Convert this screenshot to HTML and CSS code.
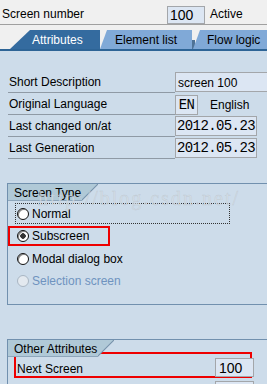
FILE: index.html
```html
<!DOCTYPE html>
<html lang="en">
<head>
    <meta charset="UTF-8">
    <meta name="viewport" content="width=device-width, initial-scale=1.0">
    <title>Screen 100 - Attributes</title>
    <link rel="stylesheet" href="styles.css">
</head>
<body>
    <div class="topbar">
        <span class="top-label">Screen number</span>
        <span class="box box-num">100</span>
        <span class="status">Active</span>
    </div>

    <div class="tabs">
        <div class="tab tab-on">Attributes</div>
        <div class="tab tab-el">Element list</div>
        <div class="tab tab-flow">Flow logic</div>
    </div>

    <div class="panel">
        <div class="fields">
            <div class="field">
                <span class="lbl">Short Description</span>
                <span class="box box-text">screen 100</span>
            </div>
            <div class="field">
                <span class="lbl">Original Language</span>
                <span class="lang">
                    <span class="box box-lang">EN</span>
                    <span>English</span>
                </span>
            </div>
            <div class="field">
                <span class="lbl">Last changed on/at</span>
                <span class="box box-date">2012.05.23</span>
            </div>
            <div class="field">
                <span class="lbl">Last Generation</span>
                <span class="box box-date">2012.05.23</span>
            </div>
        </div>

        <div class="group group-type">
            <div class="grp-title">Screen Type</div>
            <div class="radios">
                <div class="opt opt-focus"><span class="radio"></span>Normal</div>
                <div class="opt opt-mark"><span class="radio radio-on"></span>Subscreen</div>
                <div class="opt"><span class="radio"></span>Modal dialog box</div>
                <div class="opt opt-off"><span class="radio"></span>Selection screen</div>
            </div>
            <div class="watermark">http://blog.csdn.net/</div>
        </div>

        <div class="group group-other">
            <div class="grp-title">Other Attributes</div>
            <div class="next-row">
                <span class="next-label">Next Screen</span>
                <span class="box box-next">100</span>
            </div>
            <div class="more-row">
                <span class="box box-next"></span>
            </div>
        </div>
    </div>
</body>
</html>
```

FILE: styles.css
```css
* {
    margin: 0;
    padding: 0;
    box-sizing: border-box;
}

body {
    width: 267px;
    height: 384px;
    overflow: hidden;
    background-color: #f0f0f0;
    font-family: "Liberation Sans", Arial, sans-serif;
    font-size: 12px;
    color: #000;
}

/* top line: screen number */
.topbar {
    height: 25px;
    border-bottom: 1px solid #a0a0a0;
    display: flex;
    align-items: flex-end;
}

.top-label {
    width: 167px;
    padding-left: 2px;
    line-height: 19px;
}

.box {
    display: block;
    background-color: #dce6f3;
    border: 1px solid #a3a6aa;
}

.box-num {
    width: 38px;
    height: 18px;
    padding-left: 2px;
    font-size: 14px;
    line-height: 17px;
}

.status {
    margin-left: 5px;
    line-height: 19px;
}

/* tab strip */
.tabs {
    display: flex;
    margin-top: 5px;
    padding-left: 10px;
    height: 19px;
    background: linear-gradient(#4f7396, #4f7396) 192px 10px / 3px 9px no-repeat;
}

.tab {
    height: 19px;
    line-height: 21px;
    white-space: nowrap;
}

.tab-on {
    width: 90px;
    padding-left: 22px;
    background-color: #346b9f;
    color: white;
    clip-path: polygon(20px 0, 100% 0, 100% 100%, 0 100%);
}

.tab-el {
    width: 92px;
    padding-left: 15px;
    background-color: #80a9d7;
    clip-path: polygon(7px 0, 100% 0, 100% 100%, 0 100%);
}

.tab-flow {
    flex: 1;
    margin-left: 1px;
    padding-left: 14px;
    background-color: #80a9d7;
    clip-path: polygon(7px 0, 100% 0, 100% 100%, 0 100%);
}

/* content */
.panel {
    border-top: 2px solid #2d6496;
    background-color: #cddcea;
    height: 340px;
    padding-top: 20px;
    overflow: hidden;
}

.fields {
    margin-left: 8px;
}

.field {
    display: grid;
    grid-template-columns: 167px auto;
    height: 22px;
}

.lbl {
    border-bottom: 1px solid #8f9aa5;
    padding: 2px 0 0 1px;
    line-height: 19px;
}

.field .box {
    height: 20px;
    margin-top: 1px;
}

.box-text {
    width: 92px;
    border-right: none;
    padding: 1px 0 0 2px;
    line-height: 18px;
}

.lang {
    display: flex;
    align-items: center;
    gap: 12px;
    padding-top: 2px;
}

.lang .box {
    margin-top: -1px;
}

.box-lang,
.box-date {
    font-family: "Liberation Mono", "Courier New", monospace;
    font-size: 14px;
    letter-spacing: -0.6px;
    line-height: 19px;
}

.box-lang {
    width: 23px;
    text-align: center;
}

.box-date {
    width: 82px;
    padding-left: 1px;
}

/* group boxes */
.group {
    position: relative;
    margin-left: 7px;
    border: 1px solid #7190ae;
    border-right: none;
}

.group-type {
    margin-top: 24px;
}

.group-other {
    margin-top: 34px;
    border-bottom: none;
    height: 60px;
}

.grp-title {
    display: inline-block;
    height: 17px;
    line-height: 18px;
    padding: 0 17px 0 6px;
    background:
        linear-gradient(#8ea6bb, #8ea6bb) left bottom / calc(100% - 16px) 1px no-repeat,
        linear-gradient(#b0c9d7, #b0c9d7) left top / calc(100% - 16px) 100% no-repeat,
        linear-gradient(to bottom right, #b0c9d7 calc(50% - 1px), #7a95ad 50%, transparent calc(50% + 1px)) right top / 17px 100% no-repeat;
}

.radios {
    padding: 2px 0 12px 7px;
}

.opt {
    display: flex;
    align-items: center;
    gap: 3px;
    height: 22px;
    padding-left: 2px;
    white-space: nowrap;
}

.opt-focus {
    width: 215px;
    height: 21px;
    margin-bottom: 1px;
    padding-left: 1px;
    border: 1px dotted #333;
}

.opt-mark {
    width: 102px;
    height: 20px;
    margin: 2px 0 2px -7px;
    padding-left: 7px;
    border: 2px solid #ee0000;
}

.opt-off {
    color: #6f93bf;
}

.radio {
    width: 12px;
    height: 12px;
    border-radius: 50%;
    border: 1px solid #111;
    background-color: white;
    box-shadow: inset 1px 1px 0 #8a8a8a;
    flex-shrink: 0;
}

.radio-on {
    background: radial-gradient(circle, #333 2.5px, white 3px);
}

.opt-off .radio {
    border-color: #a9b6c3;
    background-color: #e3e9ef;
    box-shadow: none;
}

.watermark {
    position: absolute;
    left: 30px;
    top: 3px;
    font-family: "Liberation Serif", "Times New Roman", serif;
    font-size: 20px;
    letter-spacing: 2px;
    color: rgba(215, 222, 228, 0.7);
    -webkit-text-stroke: 0.4px rgba(160, 170, 180, 0.4);
    pointer-events: none;
}

.next-row {
    display: flex;
    align-items: flex-start;
    width: 238px;
    height: 26px;
    margin: -5px 0 0 6px;
    padding: 4px 0 0 1px;
    border: 2px solid #ee0000;
}

.next-label {
    padding-top: 2px;
    line-height: 19px;
}

.box-next {
    width: 39px;
    height: 19px;
    padding-left: 3px;
    font-size: 14px;
    line-height: 18px;
}

.next-row .box-next {
    margin-left: auto;
    margin-right: -4px;
}

.more-row {
    margin: 3px 0 0 207px;
}
```
